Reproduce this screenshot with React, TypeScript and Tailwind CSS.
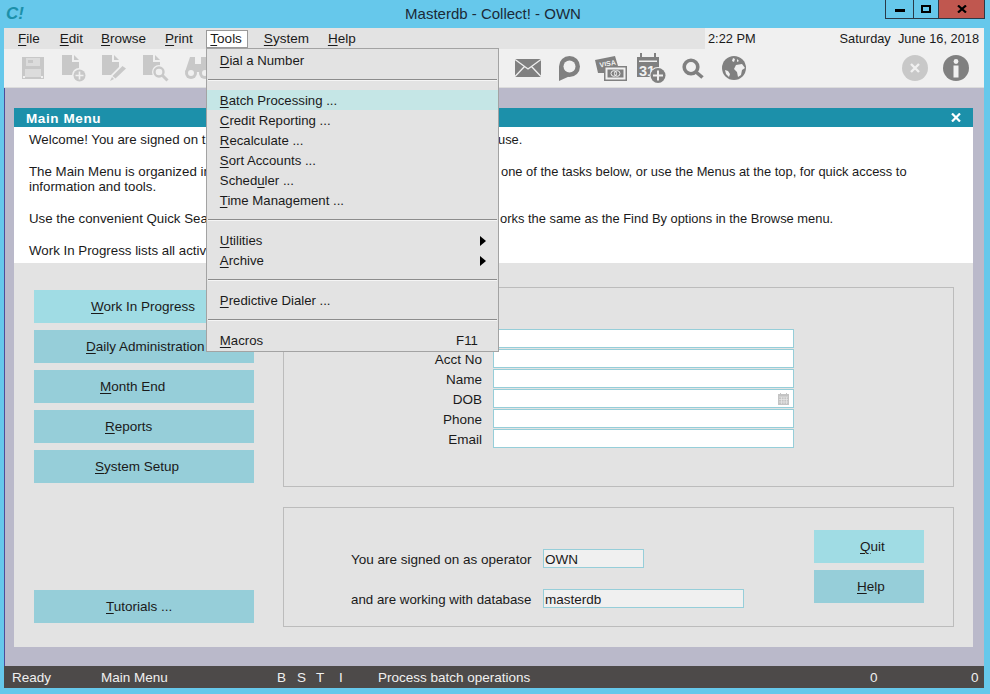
import React from 'react';

const Mn: React.FC<{ children: React.ReactNode }> = ({ children }) => (
  <span className="underline underline-offset-2 decoration-1">{children}</span>
);

const Gray = '#c8c8c8';
const Dark = '#808080';

const DiskIcon = () => (
  <svg width="22" height="22" viewBox="0 0 22 22" className="ml-[18px] shrink-0">
    <path d="M0 0H22V22H0Z" fill={Gray} />
    <rect x="4" y="1" width="14" height="8" fill="#dcdcdc" />
    <rect x="6" y="3" width="5" height="3" fill={Gray} />
    <rect x="3" y="12" width="16" height="8" fill="#dcdcdc" />
    <rect x="1" y="19" width="2" height="2" fill="#f0f0f0" />
    <rect x="19" y="19" width="2" height="2" fill="#f0f0f0" />
  </svg>
);

const DocShape: React.FC<{ fill: string }> = ({ fill }) => (
  <>
    <path d="M0 0H10V7H17V20H0Z" fill={fill} />
    <path d="M12 0L17 5H12Z" fill={fill} />
  </>
);

const DocPlusIcon = () => (
  <svg width="24" height="27" viewBox="0 0 24 27" className="ml-[18px] shrink-0">
    <DocShape fill={Gray} />
    <circle cx="17" cy="20" r="7" fill="#f0f0f0" />
    <circle cx="17.5" cy="20.5" r="6" fill={Gray} />
    <path d="M17.5 16.5V24.5M13.5 20.5H21.5" stroke="#f0f0f0" strokeWidth="1.6" />
  </svg>
);

const DocEditIcon = () => (
  <svg width="25" height="27" viewBox="0 0 25 27" className="ml-[16px] shrink-0">
    <DocShape fill={Gray} />
    <path d="M20 9L25 13L14 24L9 20Z" fill="#f0f0f0" />
    <path d="M20.5 11L24 13.5L13.5 23.5L10.5 21Z" fill={Gray} />
    <path d="M10 22L12 24L8 26Z" fill={Gray} />
  </svg>
);

const DocFindIcon = () => (
  <svg width="26" height="27" viewBox="0 0 26 27" className="ml-[16px] shrink-0">
    <DocShape fill={Gray} />
    <circle cx="16" cy="17" r="7" fill="#f0f0f0" />
    <circle cx="16" cy="17" r="4.5" fill="#f0f0f0" stroke={Gray} strokeWidth="2.4" />
    <path d="M19.5 20.5L24.5 25.5" stroke={Gray} strokeWidth="3" />
  </svg>
);

const BinocularsIcon = () => (
  <svg width="26" height="24" viewBox="0 0 26 24" className="ml-[16px] shrink-0">
    <path d="M5 1H10V8H16V1H21L26 16H0Z" fill={Gray} />
    <circle cx="6" cy="17" r="6" fill={Gray} />
    <circle cx="20" cy="17" r="6" fill={Gray} />
    <circle cx="6" cy="17" r="3" fill="#f0f0f0" />
    <circle cx="20" cy="17" r="3" fill="#f0f0f0" />
  </svg>
);

const MailIcon = () => (
  <svg width="26" height="18" viewBox="0 0 26 18" className="ml-[304px] shrink-0">
    <rect width="26" height="18" fill={Dark} />
    <path d="M0 0.5L13 10L26 0.5M0 17.5L9.5 7.5M26 17.5L16.5 7.5" fill="none" stroke="#f0f0f0" strokeWidth="1.3" />
  </svg>
);

const PinIcon = () => (
  <svg width="22" height="25" viewBox="0 0 22 25" className="ml-[17px] shrink-0">
    <circle cx="11.5" cy="10.5" r="10.5" fill={Dark} />
    <path d="M1 10L1 25L12 20Z" fill={Dark} />
    <circle cx="11.5" cy="10.5" r="6" fill="#f0f0f0" />
  </svg>
);

const CardsIcon = () => (
  <svg width="32" height="25" viewBox="0 0 32 25" className="ml-[15px] shrink-0">
    <path d="M0 4L20 0L23 10H9V17H3Z" fill={Dark} />
    <text x="5" y="11.5" fontSize="7" fontWeight="700" fill="#f0f0f0" fontFamily="'Liberation Sans', sans-serif" transform="rotate(-10 5 11)">
      VISA
    </text>
    <rect x="9" y="10" width="23" height="15" fill={Dark} />
    <rect x="10.5" y="11.5" width="20" height="12" fill="#f0f0f0" />
    <rect x="12.5" y="13.5" width="16" height="8" fill={Dark} />
    <circle cx="18.8" cy="17.5" r="2.8" fill="none" stroke="#f0f0f0" strokeWidth="1" />
    <circle cx="22.2" cy="17.5" r="2.8" fill="none" stroke="#f0f0f0" strokeWidth="1" />
  </svg>
);

const CalendarPlusIcon = () => (
  <svg width="29" height="30" viewBox="0 0 29 30" className="ml-[10px] shrink-0">
    <path d="M0 4H3V0H5V4H17V0H19V4H22V24H0Z" fill={Dark} />
    <rect x="2" y="7.5" width="18" height="1.5" fill="#f0f0f0" />
    <text x="2" y="22.5" fontSize="14.5" fontWeight="700" fill="#f0f0f0" fontFamily="'Liberation Sans', sans-serif">
      31
    </text>
    <circle cx="21" cy="22.5" r="8.5" fill="#f0f0f0" />
    <circle cx="21" cy="22.5" r="7.5" fill={Dark} />
    <path d="M21 17.5V27.5M16 22.5H26" stroke="#f0f0f0" strokeWidth="2" />
  </svg>
);

const SearchIcon = () => (
  <svg width="22" height="21" viewBox="0 0 22 21" className="ml-[16px] shrink-0">
    <circle cx="9" cy="9" r="6.8" fill="none" stroke={Dark} strokeWidth="3.6" />
    <path d="M14 14L20.5 19.5" stroke={Dark} strokeWidth="3.6" />
  </svg>
);

const GlobeIcon = () => (
  <svg width="24" height="24" viewBox="0 0 24 24" className="ml-[18px] shrink-0">
    <circle cx="12" cy="12" r="12" fill={Dark} />
    <path d="M11 2L13 3L12 6L10 5ZM15 3L17 5L15 6ZM14 9L20 8L23 12L20 14L19 19L16 21L15 16L12 13Z" fill="#f0f0f0" />
    <path d="M3 14L6 15L8 18L7 21L4 18Z" fill="#f0f0f0" />
  </svg>
);

const CancelIcon = () => (
  <svg width="26" height="26" viewBox="0 0 26 26" className="ml-[156px] shrink-0">
    <circle cx="13" cy="13" r="13" fill={Gray} />
    <path d="M9 9L17 17M17 9L9 17" stroke="#f0f0f0" strokeWidth="2.4" />
  </svg>
);

const InfoIcon = () => (
  <svg width="26" height="26" viewBox="0 0 26 26" className="ml-[15px] shrink-0">
    <circle cx="13" cy="13" r="13" fill={Dark} />
    <circle cx="13" cy="6.5" r="2.4" fill="#f0f0f0" />
    <rect x="10.5" y="10.5" width="5" height="12" fill="#f0f0f0" />
  </svg>
);

const menuRow = 'flex items-center justify-between h-[20px] pt-[2px] pl-[13px] pr-[13px]';

const Separator = () => (
  <div className="h-[20px] flex flex-col justify-center px-px">
    <div className="h-px bg-[#8c8c8c]" />
    <div className="h-px bg-[#f5f5f5]" />
  </div>
);

const Arrow = () => <span className="w-0 h-0 border-y-[5px] border-y-transparent border-l-[6px] border-l-black mr-[-1px]" />;

const ToolsMenu = () => (
  <div className="absolute left-[-1px] top-[17px] z-10 w-[293px] h-[304px] py-px bg-[#e3e3e3] border border-[#a3a3a3] text-[13.2px] text-[#1a1a1a]">
    <div className={menuRow}><span><Mn>D</Mn>ial a Number</span></div>
    <Separator />
    <div className={`${menuRow} bg-[#c5e6e6]`}><span><Mn>B</Mn>atch Processing ...</span></div>
    <div className={menuRow}><span><Mn>C</Mn>redit Reporting ...</span></div>
    <div className={menuRow}><span><Mn>R</Mn>ecalculate ...</span></div>
    <div className={menuRow}><span><Mn>S</Mn>ort Accounts ...</span></div>
    <div className={menuRow}><span>Sched<Mn>u</Mn>ler ...</span></div>
    <div className={menuRow}><span><Mn>T</Mn>ime Management ...</span></div>
    <Separator />
    <div className={menuRow}><span><Mn>U</Mn>tilities</span><Arrow /></div>
    <div className={menuRow}><span><Mn>A</Mn>rchive</span><Arrow /></div>
    <Separator />
    <div className={menuRow}><span><Mn>P</Mn>redictive Dialer ...</span></div>
    <Separator />
    <div className={`${menuRow} pr-[20px]`}><span><Mn>M</Mn>acros</span><span>F11</span></div>
  </div>
);

const SideButton: React.FC<{ light?: boolean; className?: string; children: React.ReactNode }> = ({ light, className = '', children }) => (
  <div className={`h-[33px] flex items-center text-[#1a1a1a] ${light ? 'bg-[#a0dce4]' : 'bg-[#96ced9]'} ${className}`}>
    {children}
  </div>
);

const SearchRow: React.FC<{ label?: string; children?: React.ReactNode }> = ({ label, children }) => (
  <div className="flex items-center h-[19px]">
    <div className="w-[198px] pt-[2px] text-right">{label}</div>
    <div className="ml-[11px] w-[301px] h-[19px] flex items-center justify-end pr-[4px] bg-white border border-[#96ced9]">{children}</div>
  </div>
);

const App: React.FC = () => {
  return (
    <div className="w-[990px] h-[694px] overflow-hidden flex flex-col bg-[#66c8eb] text-[13.5px] leading-[16px] text-[#1a1a1a] font-['Liberation_Sans',Arial,sans-serif]">
      {/* title bar */}
      <div className="h-[28px] shrink-0 flex items-start">
        <div className="w-[401px] pl-[6px] pt-[4px] text-[#1c90aa] text-[17px] leading-[20px] font-bold italic">C!</div>
        <div className="w-[184px] pt-[5px] text-center text-[15px] leading-[17px] text-[#1b2a38]">Masterdb - Collect! - OWN</div>
        <div className="ml-[300px] flex h-[19px] w-[100px] border border-t-0 border-[#2a3a48]">
          <div className="w-[28px] flex items-center justify-center border-r border-[#2a3a48]">
            <span className="w-[10px] h-[3px] mt-[3px] bg-black" />
          </div>
          <div className="w-[25px] flex items-center justify-center border-r border-[#2a3a48]">
            <span className="w-[10px] h-[8px] border-2 border-black" />
          </div>
          <div className="flex-1 flex items-center justify-center bg-[#c0574f]">
            <svg width="10" height="8" viewBox="0 0 10 8">
              <path d="M1 0.5L9 7.5M9 0.5L1 7.5" stroke="#000" strokeWidth="2.2" />
            </svg>
          </div>
        </div>
      </div>

      {/* client */}
      <div className="mx-[4px] mr-[6px] h-[660px] shrink-0 flex flex-col">
        <div className="h-[21px] shrink-0 flex bg-[#f0f0f0]">
          <div className="w-[701px] flex items-center bg-[#e3e3e3]">
            <span className="ml-[14px]"><Mn>F</Mn>ile</span>
            <span className="ml-[20px]"><Mn>E</Mn>dit</span>
            <span className="ml-[18px]"><Mn>B</Mn>rowse</span>
            <span className="ml-[19px]"><Mn>P</Mn>rint</span>
            <span className="relative ml-[13px] h-[18px] w-[42px] pl-[3.5px] bg-white border border-[#9a9a9a] flex items-center">
              <span><Mn>T</Mn>ools</span>
              <ToolsMenu />
            </span>
            <span className="ml-[16px]"><Mn>S</Mn>ystem</span>
            <span className="ml-[19px]"><Mn>H</Mn>elp</span>
          </div>
          <div className="flex-1 flex items-center pl-[3px] pr-[5px] justify-between text-[12.8px]">
            <span>2:22 PM</span>
            <span>Saturday&nbsp; June 16, 2018</span>
          </div>
        </div>

        <div className="h-[39px] shrink-0 flex items-center bg-[#f0f0f0] border-b border-[#dcdcdc]">
          <DiskIcon />
          <DocPlusIcon />
          <DocEditIcon />
          <DocFindIcon />
          <BinocularsIcon />
          <MailIcon />
          <PinIcon />
          <CardsIcon />
          <CalendarPlusIcon />
          <SearchIcon />
          <GlobeIcon />
          <CancelIcon />
          <InfoIcon />
        </div>

        {/* workspace */}
        <div className="flex-1 min-h-0 pt-[20px] pb-[19px] pl-[9px] pr-[11px] bg-[#bab9ca] border-l border-[#4d4d9a]">
          <div className="h-full flex flex-col bg-[#e3e3e3]">
            <div className="h-[19px] shrink-0 flex items-center justify-between pt-[2px] px-[12px] bg-[#1c90aa] text-white font-bold tracking-[0.6px]">
              <span>Main Menu</span>
              <svg width="10" height="9" viewBox="0 0 10 9" className="-mt-[2px]">
                <path d="M1 0.5L9 8.5M9 0.5L1 8.5" stroke="#fff" strokeWidth="2.2" />
              </svg>
            </div>

            <div className="h-[136px] shrink-0 pl-[15px] pt-[5px] bg-white text-[13.3px] whitespace-nowrap">
              <p className="h-[16px]"><span className="inline-block w-[469px]">Welcome! You are signed on t</span><span className="text-[12.9px]">use.</span></p>
              <p className="h-[15px] mt-[16px]"><span className="inline-block w-[472px]">The Main Menu is organized in</span><span className="text-[12.9px]">one of the tasks below, or use the Menus at the top, for quick access to</span></p>
              <p className="h-[16px]">information and tools.</p>
              <p className="h-[16px] mt-[16px]"><span className="inline-block w-[471px]">Use the convenient Quick Sea</span><span className="text-[12.9px]">orks the same as the Find By options in the Browse menu.</span></p>
              <p className="h-[16px] mt-[16px]">Work In Progress lists all activ</p>
            </div>

            <div className="flex-1 min-h-0 flex pt-[24px] pb-[20px] pl-[20px]">
              <div className="w-[220px] flex flex-col gap-[7px] pt-[3px] pb-[4px]">
                <SideButton light className="pl-[57px]"><span><Mn>W</Mn>ork In Progress</span></SideButton>
                <SideButton className="pl-[52px]"><span><Mn>D</Mn>aily Administration</span></SideButton>
                <SideButton className="pl-[66px]"><span><Mn>M</Mn>onth End</span></SideButton>
                <SideButton className="pl-[71px]"><span><Mn>R</Mn>eports</span></SideButton>
                <SideButton className="pl-[61px]"><span><Mn>S</Mn>ystem Setup</span></SideButton>
                <SideButton className="mt-auto pl-[72px]"><span><Mn>T</Mn>utorials ...</span></SideButton>
              </div>

              <div className="ml-[29px] w-[671px] flex flex-col gap-[20px]">
                <div className="h-[200px] flex flex-col gap-px pt-[41px] border border-[#bcbcbc]">
                  <SearchRow />
                  <SearchRow label="Acct No" />
                  <SearchRow label="Name" />
                  <SearchRow label="DOB">
                    <svg width="11" height="12" viewBox="0 0 11 12">
                      <path d="M0 1H2V0H3V1H8V0H9V1H11V12H0Z" fill="#c4c4c4" />
                      <path d="M1 4H10M1 6.5H10M1 9H10M3.5 4V11M6 4V11M8.5 4V11" stroke="#e8e8e8" strokeWidth="0.7" />
                    </svg>
                  </SearchRow>
                  <SearchRow label="Phone" />
                  <SearchRow label="Email" />
                </div>

                <div className="h-[120px] flex border border-[#bcbcbc]">
                  <div className="pl-[67px] pt-[41px] flex flex-col gap-[21px]">
                    <div className="flex items-center h-[19px]">
                      <span className="w-[192px] pt-[2px] text-[13.5px]">You are signed on as operator</span>
                      <div className="w-[101px] h-[19px] pl-[1px] pt-[2px] flex items-center bg-[#f0f0f0] border border-[#96ced9]">OWN</div>
                    </div>
                    <div className="flex items-center h-[19px]">
                      <span className="w-[192px] pt-[2px] text-[13.3px]">and are working with database</span>
                      <div className="w-[201px] h-[19px] pl-[1px] pt-[2px] flex items-center bg-[#f0f0f0] border border-[#96ced9]">masterdb</div>
                    </div>
                  </div>
                  <div className="ml-auto mr-[29px] mt-[22px] w-[110px] flex flex-col gap-[7px]">
                    <SideButton light className="pl-[46px]"><span><Mn>Q</Mn>uit</span></SideButton>
                    <SideButton className="pl-[43px]"><span><Mn>H</Mn>elp</span></SideButton>
                  </div>
                </div>
              </div>
            </div>
          </div>
        </div>

        {/* status bar */}
        <div className="h-[22px] shrink-0 flex items-center pt-[2px] bg-[#4d4a49] text-[#f0f0f0] whitespace-nowrap">
          <span className="w-[97px] pl-[8px]">Ready</span>
          <span className="w-[176px]">Main Menu</span>
          <span className="w-[20px]">B</span>
          <span className="w-[19px]">S</span>
          <span className="w-[23px]">T</span>
          <span className="w-[39px]">I</span>
          <span className="w-[492px]">Process batch operations</span>
          <span className="w-[101px]">0</span>
          <span>0</span>
        </div>
      </div>
    </div>
  );
};

export default App;
